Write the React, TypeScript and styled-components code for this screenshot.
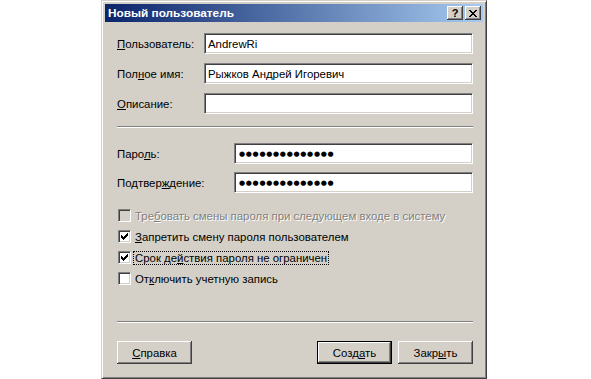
import styled, { createGlobalStyle, css } from 'styled-components';

const GlobalStyle = createGlobalStyle`
  body {
    margin: 0;
    background: #fff;
    font-family: "Liberation Sans", Arial, sans-serif;
    font-size: 11.4px;
    color: #000;
  }
`;

const Page = styled.div`
  padding-left: 101px;
`;

const Dialog = styled.div`
  width: 386px;
  height: 379px;
  box-sizing: border-box;
  background: #d4d0c8;
  border: 1px solid;
  border-color: #d4d0c8 #404040 #404040 #d4d0c8;
  box-shadow: inset 1px 1px #fff, inset -1px -1px #808080;
  padding: 3px;
  display: flex;
  flex-direction: column;
`;

const TitleBar = styled.div`
  height: 18px;
  display: flex;
  align-items: center;
  padding: 0 2px 0 3px;
  background: linear-gradient(to right, #0a246a, #a6caf0);
`;

const Title = styled.span`
  flex: 1;
  color: #fff;
  font-weight: bold;
  font-size: 11.8px;
`;

const CaptionButton = styled.div<{ $gap?: number }>`
  width: 16px;
  height: 14px;
  box-sizing: border-box;
  margin-left: ${p => p.$gap ?? 0}px;
  background: #d4d0c8;
  box-shadow: inset -1px -1px #404040, inset 1px 1px #fff, inset -2px -2px #808080;
  display: flex;
  align-items: center;
  justify-content: center;
  font-weight: bold;
  font-size: 11px;
  line-height: 1;
`;

const Body = styled.div`
  flex: 1;
  display: flex;
  flex-direction: column;
  padding: 11px 10px 10px 12px;
`;

const Group = styled.div<{ $gap: number; $top?: number }>`
  display: flex;
  flex-direction: column;
  gap: ${p => p.$gap}px;
  margin-top: ${p => p.$top ?? 0}px;
`;

const FieldRow = styled.div<{ $label: number }>`
  display: grid;
  grid-template-columns: ${p => p.$label}px 1fr;
  align-items: center;
  height: 21px;
`;

const Label = styled.span`
  white-space: nowrap;
`;

const U = styled.span`
  text-decoration: underline;
`;

const Edit = styled.div`
  height: 21px;
  box-sizing: border-box;
  background: #fff;
  border: 1px solid;
  border-color: #808080 #fff #fff #808080;
  box-shadow: inset 1px 1px #404040, inset -1px -1px #d4d0c8;
  padding: 0 3px;
  display: flex;
  align-items: center;
  white-space: nowrap;
  overflow: hidden;
`;

const Dots = styled.span`
  font-family: "DejaVu Sans", sans-serif;
  font-size: 7px;
  letter-spacing: 0.7px;
  padding-left: 1px;
`;

const Separator = styled.div<{ $top: number }>`
  margin-top: ${p => p.$top}px;
  border-top: 1px solid #808080;
  border-bottom: 1px solid #fff;
`;

const CheckList = styled.div`
  display: flex;
  flex-direction: column;
  margin-top: 12px;
`;

const CheckRow = styled.div<{ $disabled?: boolean }>`
  height: 21px;
  display: flex;
  align-items: center;
  gap: 4px;
  padding-left: 1px;
  white-space: nowrap;
  ${p =>
    p.$disabled &&
    css`
      color: #808080;
      text-shadow: 1px 1px #fff;
    `}
`;

const Box = styled.span<{ $disabled?: boolean }>`
  width: 13px;
  height: 13px;
  box-sizing: border-box;
  flex: none;
  background: ${p => (p.$disabled ? '#d4d0c8' : '#fff')};
  border: 1px solid;
  border-color: #808080 #fff #fff #808080;
  box-shadow: inset 1px 1px #404040, inset -1px -1px #d4d0c8;
  display: flex;
  align-items: center;
  justify-content: center;
`;

const Focus = styled.span`
  outline: 1px dotted #000;
  outline-offset: 0;
  padding: 0 1px;
  margin-left: -1px;
`;

const ButtonBar = styled.div`
  display: flex;
  align-items: center;
  gap: 6px;
  margin-top: 18px;
`;

const Spacer = styled.div`
  flex: 1;
`;

const Button = styled.div<{ $default?: boolean }>`
  width: 75px;
  height: 23px;
  box-sizing: border-box;
  display: flex;
  align-items: center;
  justify-content: center;
  background: #d4d0c8;
  box-shadow: inset -1px -1px #404040, inset 1px 1px #fff, inset -2px -2px #808080;
  ${p =>
    p.$default &&
    css`
      border: 1px solid #000;
    `}
`;

function Check() {
  return (
    <svg width="7" height="7" viewBox="0 0 7 7" shapeRendering="crispEdges">
      <path
        d="M0 2h1v1h1v1h1V3h1V2h1V1h1V0h1v3h-1v1h-1v1h-1v1h-1v1h-1V6H1V5H0z"
        fill="#000"
      />
    </svg>
  );
}

function CloseGlyph() {
  return (
    <svg width="8" height="7" viewBox="0 0 8 7" shapeRendering="crispEdges">
      <path
        d="M0 0h2v1h1v1h2V1h1V0h2v1H7v1H6v1H5v1h1v1h1v1h1v1H6V6H5V5H3v1H2v1H0V6h1V5h1V4h1V3H2V2H1V1H0z"
        fill="#000"
      />
    </svg>
  );
}

const PASSWORD = '●●●●●●●●●●●●●●';

export default function App() {
  return (
    <>
      <GlobalStyle />
      <Page>
        <Dialog>
          <TitleBar>
            <Title>Новый пользователь</Title>
            <CaptionButton>?</CaptionButton>
            <CaptionButton $gap={2}>
              <CloseGlyph />
            </CaptionButton>
          </TitleBar>
          <Body>
            <Group $gap={9}>
              <FieldRow $label={87}>
                <Label>
                  <U>П</U>ользователь:
                </Label>
                <Edit>AndrewRi</Edit>
              </FieldRow>
              <FieldRow $label={87}>
                <Label>
                  Пол<U>н</U>ое имя:
                </Label>
                <Edit>Рыжков Андрей Игоревич</Edit>
              </FieldRow>
              <FieldRow $label={87}>
                <Label>
                  <U>О</U>писание:
                </Label>
                <Edit />
              </FieldRow>
            </Group>

            <Separator $top={12} />

            <Group $gap={8} $top={15}>
              <FieldRow $label={117}>
                <Label>
                  Паро<U>л</U>ь:
                </Label>
                <Edit>
                  <Dots>{PASSWORD}</Dots>
                </Edit>
              </FieldRow>
              <FieldRow $label={117}>
                <Label>
                  Подтвер<U>ж</U>дение:
                </Label>
                <Edit>
                  <Dots>{PASSWORD}</Dots>
                </Edit>
              </FieldRow>
            </Group>

            <CheckList>
              <CheckRow $disabled>
                <Box $disabled />
                <span>
                  Тре<U>б</U>овать смены пароля при следующем входе в систему
                </span>
              </CheckRow>
              <CheckRow>
                <Box>
                  <Check />
                </Box>
                <span>
                  <U>З</U>апретить смену пароля пользователем
                </span>
              </CheckRow>
              <CheckRow>
                <Box>
                  <Check />
                </Box>
                <Focus>
                  Срок де<U>й</U>ствия пароля не ограничен
                </Focus>
              </CheckRow>
              <CheckRow>
                <Box />
                <span>
                  От<U>к</U>лючить учетную запись
                </span>
              </CheckRow>
            </CheckList>

            <Separator $top={32} />

            <ButtonBar>
              <Button>
                <span>
                  <U>С</U>правка
                </span>
              </Button>
              <Spacer />
              <Button $default>
                <span>
                  Созд<U>а</U>ть
                </span>
              </Button>
              <Button>
                <span>
                  Закр<U>ы</U>ть
                </span>
              </Button>
            </ButtonBar>
          </Body>
        </Dialog>
      </Page>
    </>
  );
}
